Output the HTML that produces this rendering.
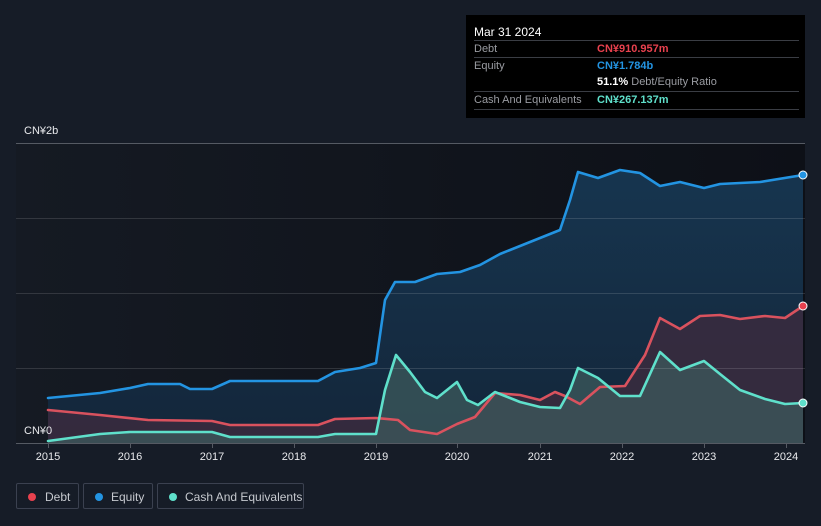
<!DOCTYPE html>
<html><head><meta charset="utf-8"><style>
body{margin:0;width:821px;height:526px;background:#161c27;font-family:"Liberation Sans",sans-serif;overflow:hidden;position:relative}
.tip{position:absolute;left:466px;top:15px;width:339px;height:103px;background:#000;color:#fff;font-size:11px}
.tip .h{position:absolute;left:8px;top:10px;font-size:12px}
.row{position:absolute;left:8px;width:325px;height:17px;border-top:1px solid #3a3d44;line-height:17px;color:#9a9ca2}
.row span{position:absolute;left:123px;font-weight:bold}
.leg{position:absolute;top:483px;height:26px;border:1px solid #3b4150;border-radius:2px;color:#c6c9cf;font-size:12px;line-height:26px;box-sizing:border-box}
.leg i{position:absolute;left:11px;top:9px;width:8px;height:8px;border-radius:50%}
.ax{position:absolute;top:451px;color:#e8e9ec;font-size:11px;width:40px;text-align:center}
</style></head><body>
<svg width="821" height="526" style="position:absolute;left:0;top:0">
<defs>
<linearGradient id="bg" x1="0" x2="1"><stop offset="0" stop-color="#151a23"/><stop offset="1" stop-color="#0d1017"/></linearGradient>
<linearGradient id="eq" x1="0" y1="0" x2="0" y2="1"><stop offset="0" stop-color="#16354f"/><stop offset="1" stop-color="#14263a"/></linearGradient>
</defs>
<rect x="16" y="143" width="789" height="300" fill="url(#bg)"/>
<polygon fill="url(#eq)" points="48,443 48,398 100,393 130,388 148,384 180,384 190,389 212,389 230,381 260,381 318,381 335,372 360,368 376,363 385,300 395,282 415,282 437,274 460,272 480,265 500,254 540,238 560,230 570,200 578,172 598,178 620,170 640,173 660,186 680,182 704,188 720,184 760,182 803,175 803,443"/>
<polygon fill="#3a2b3e" fill-opacity="0.85" points="48,443 48,410 100,415 148,420 212,421 230,425 318,425 335,419 376,418 398,420 410,430 437,434 457,424 475,417 495,393 520,395 540,400 555,392 565,396 580,404 600,387 625,386 645,355 660,318 680,329 700,316 720,315 740,319 765,316 785,318 803,306 803,443"/>
<polygon fill="#3c5a5c" fill-opacity="0.75" points="48,443 48,441 100,434 130,432 212,432 230,437 318,437 335,434 376,434 385,390 396,355 410,372 425,392 437,398 457,382 467,400 478,405 495,392 505,396 520,402 540,407 560,408 570,390 578,368 598,378 620,396 640,396 660,352 680,370 704,361 720,374 740,390 765,399 785,404 803,403 803,443"/>
<g stroke="#ffffff" stroke-opacity="0.13" stroke-width="1"><line x1="16" y1="218.5" x2="805" y2="218.5"/><line x1="16" y1="293.5" x2="805" y2="293.5"/><line x1="16" y1="368.5" x2="805" y2="368.5"/></g>
<line x1="16" y1="143.5" x2="805" y2="143.5" stroke="#555a63"/>
<line x1="16" y1="443.5" x2="805" y2="443.5" stroke="#555a63"/>
<g fill="none" stroke-width="2.6" stroke-linejoin="round" stroke-linecap="round">
<polyline stroke="#2394e2" points="48,398 100,393 130,388 148,384 180,384 190,389 212,389 230,381 260,381 318,381 335,372 360,368 376,363 385,300 395,282 415,282 437,274 460,272 480,265 500,254 540,238 560,230 570,200 578,172 598,178 620,170 640,173 660,186 680,182 704,188 720,184 760,182 803,175"/>
<polyline stroke="#d9525e" points="48,410 100,415 148,420 212,421 230,425 318,425 335,419 376,418 398,420 410,430 437,434 457,424 475,417 495,393 520,395 540,400 555,392 565,396 580,404 600,387 625,386 645,355 660,318 680,329 700,316 720,315 740,319 765,316 785,318 803,306"/>
<polyline stroke="#5fe0cb" points="48,441 100,434 130,432 212,432 230,437 318,437 335,434 376,434 385,390 396,355 410,372 425,392 437,398 457,382 467,400 478,405 495,392 505,396 520,402 540,407 560,408 570,390 578,368 598,378 620,396 640,396 660,352 680,370 704,361 720,374 740,390 765,399 785,404 803,403"/>
</g>
<circle cx="803" cy="175" r="4" fill="#2394e2" stroke="#fff"/>
<circle cx="803" cy="306" r="4" fill="#e8414e" stroke="#fff"/>
<circle cx="803" cy="403" r="4" fill="#5fe0cb" stroke="#fff"/>
<g stroke="#555a63"><line x1="48.5" y1="443" x2="48.5" y2="448"/><line x1="130.5" y1="443" x2="130.5" y2="448"/><line x1="212.5" y1="443" x2="212.5" y2="448"/><line x1="294.5" y1="443" x2="294.5" y2="448"/><line x1="376.5" y1="443" x2="376.5" y2="448"/><line x1="457.5" y1="443" x2="457.5" y2="448"/><line x1="540.5" y1="443" x2="540.5" y2="448"/><line x1="622.5" y1="443" x2="622.5" y2="448"/><line x1="704.5" y1="443" x2="704.5" y2="448"/><line x1="786.5" y1="443" x2="786.5" y2="448"/></g>
</svg>
<div style="position:absolute;left:24px;top:125px;color:#e8e9ec;font-size:11px">CN¥2b</div>
<div style="position:absolute;left:24px;top:425px;color:#e8e9ec;font-size:11px">CN¥0</div>
<div class="ax" style="left:28px">2015</div><div class="ax" style="left:110px">2016</div><div class="ax" style="left:192px">2017</div><div class="ax" style="left:274px">2018</div><div class="ax" style="left:356px">2019</div><div class="ax" style="left:437px">2020</div><div class="ax" style="left:520px">2021</div><div class="ax" style="left:602px">2022</div><div class="ax" style="left:684px">2023</div><div class="ax" style="left:766px">2024</div>
<div class="tip"><div class="h">Mar 31 2024</div>
<div class="row" style="top:25px">Debt<span style="color:#e8414e">CN¥910.957m</span></div>
<div class="row" style="top:42px">Equity<span style="color:#2394e2">CN¥1.784b</span></div>
<div class="row" style="top:59px;border-top:none"><span style="color:#fff">51.1% <b style="color:#9a9ca2;font-weight:normal">Debt/Equity Ratio</b></span></div>
<div class="row" style="top:76px">Cash And Equivalents<span style="color:#5fe0cb">CN¥267.137m</span></div>
<div class="row" style="top:94px;height:0"></div>
</div>
<div class="leg" style="left:16px;width:63px"><i style="background:#e8414e"></i><span style="position:absolute;left:28px">Debt</span></div>
<div class="leg" style="left:83px;width:70px"><i style="background:#2394e2"></i><span style="position:absolute;left:27px">Equity</span></div>
<div class="leg" style="left:157px;width:147px"><i style="background:#5fe0cb"></i><span style="position:absolute;left:27px">Cash And Equivalents</span></div>
</body></html>
